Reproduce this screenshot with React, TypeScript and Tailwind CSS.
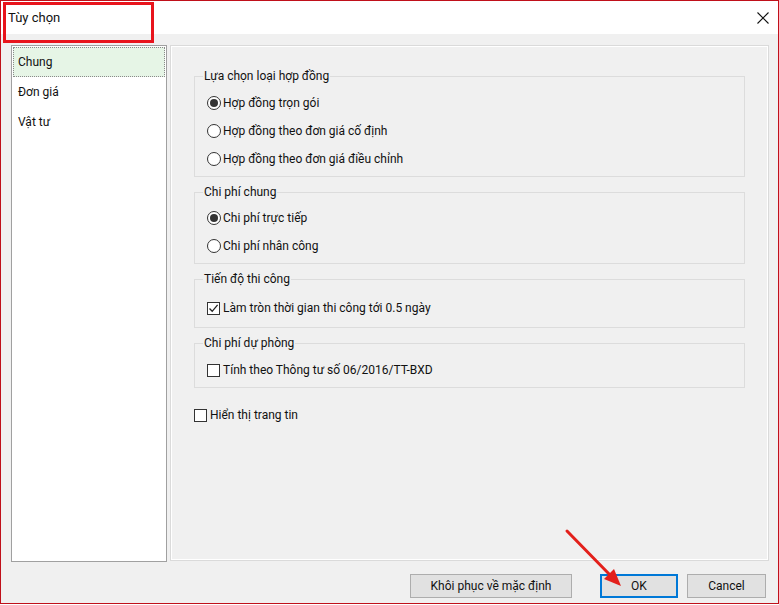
import React from "react";

function Radio({ checked }: { checked?: boolean }) {
  return (
    <span className="w-[14px] h-[14px] rounded-full border border-[#333333] bg-white flex items-center justify-center shrink-0">
      {checked && <span className="w-[8px] h-[8px] rounded-full bg-[#333333]" />}
    </span>
  );
}

function Check({ checked }: { checked?: boolean }) {
  return (
    <span className="w-[13px] h-[13px] border border-[#333333] bg-white flex items-center justify-center shrink-0">
      {checked && (
        <svg width="11" height="11" viewBox="0 0 11 11">
          <path d="M1.5 5.5 L4.2 8.3 L9.6 1.8" fill="none" stroke="#222" strokeWidth="1.3" />
        </svg>
      )}
    </span>
  );
}

function RadioRow({ label, checked }: { label: string; checked?: boolean }) {
  return (
    <div className="h-[28px] flex items-center gap-[2px] ml-[4px]">
      <Radio checked={checked} />
      <span>{label}</span>
    </div>
  );
}

function CheckRow({ label, checked }: { label: string; checked?: boolean }) {
  return (
    <div className="h-[28px] flex items-center gap-[3px] ml-[4px]">
      <Check checked={checked} />
      <span>{label}</span>
    </div>
  );
}

export default function App() {
  return (
    <div className="w-[779px] h-[605px] bg-white relative font-['Roboto',sans-serif] text-[12px] text-[#111111] leading-[16px]">
      <div className="w-[779px] h-[604px] border border-[#c0101a] flex flex-col">
        {/* title bar */}
        <div className="h-[33px] bg-white flex items-center justify-between pl-[7px] pr-[9px] shrink-0">
          <span className="text-[13px]">Tùy chọn</span>
          <svg width="12" height="12" viewBox="0 0 12 12">
            <path d="M0.5 0.5 L11.5 11.5 M11.5 0.5 L0.5 11.5" stroke="#111" strokeWidth="1.1" />
          </svg>
        </div>
        {/* body */}
        <div className="flex-1 bg-[#f0f0f0] flex flex-col pl-[10px] pr-[9px] pt-[11px]">
          <div className="flex gap-[3px]">
            {/* left list */}
            <div className="w-[156px] h-[517px] bg-white border border-[#a0a0a0] p-[1px]">
              <div className="h-[30px] flex items-center pl-[4px] bg-[#e6f5e6] border border-dotted border-[#8a8a8a]">
                Chung
              </div>
              <div className="h-[30px] flex items-center pl-[5px]">Đơn giá</div>
              <div className="h-[30px] flex items-center pl-[5px]">Vật tư</div>
            </div>
            {/* right panel */}
            <div className="w-[599px] h-[516px] border border-[#dadada] bg-[#f0f0f0]">
              <div className="h-full border border-white pl-[22px] pr-[22px] pt-[21px]">
                <fieldset className="border border-[#dcdcdc] pl-[8px] pt-[5px] pb-[3px]">
                  <legend className="px-[1px] leading-[16px]">Lựa chọn loại hợp đồng</legend>
                  <RadioRow label="Hợp đồng trọn gói" checked />
                  <RadioRow label="Hợp đồng theo đơn giá cố định" />
                  <RadioRow label="Hợp đồng theo đơn giá điều chỉnh" />
                </fieldset>
                <fieldset className="mt-[7px] border border-[#dcdcdc] pl-[8px] pt-[4px] pb-[3px]">
                  <legend className="px-[1px] leading-[16px]">Chi phí chung</legend>
                  <RadioRow label="Chi phí trực tiếp" checked />
                  <RadioRow label="Chi phí nhân công" />
                </fieldset>
                <fieldset className="mt-[7px] border border-[#dcdcdc] pl-[8px] pt-[7px] pb-[5px]">
                  <legend className="px-[1px] leading-[16px]">Tiến độ thi công</legend>
                  <CheckRow label="Làm tròn thời gian thi công tới 0.5 ngày" checked />
                </fieldset>
                <fieldset className="mt-[7px] border border-[#dcdcdc] pl-[8px] pt-[5px] pb-[3px]">
                  <legend className="px-[1px] leading-[16px]">Chi phí dự phòng</legend>
                  <CheckRow label="Tính theo Thông tư số 06/2016/TT-BXD" />
                </fieldset>
                <div className="mt-[13px] h-[28px] flex items-center gap-[3px]">
                  <Check />
                  <span>Hiển thị trang tin</span>
                </div>
              </div>
            </div>
          </div>
          {/* buttons */}
          <div className="mt-[12px] flex justify-end pr-[3px]">
            <button className="w-[162px] h-[24px] bg-[#e1e1e1] border border-[#adadad] flex items-center justify-center">
              Khôi phục về mặc định
            </button>
            <button className="ml-[28px] w-[78px] h-[24px] bg-[#e1e1e1] border-2 border-[#0078d7] flex items-center justify-center">
              OK
            </button>
            <button className="ml-[9px] w-[79px] h-[24px] bg-[#e1e1e1] border border-[#adadad] flex items-center justify-center">
              Cancel
            </button>
          </div>
        </div>
      </div>
      {/* red highlight around title */}
      <div className="absolute left-[3px] top-[2px] w-[151px] h-[41px] border-[3px] border-[#e8141c]" />
      {/* red arrow */}
      <svg className="absolute left-0 top-0 pointer-events-none" width="779" height="605">
        <line x1="567" y1="531" x2="611" y2="576" stroke="#e3201b" strokeWidth="3" strokeLinecap="round" />
        <polygon points="621,586 604,579 614,569" fill="#e3201b" />
      </svg>
    </div>
  );
}
